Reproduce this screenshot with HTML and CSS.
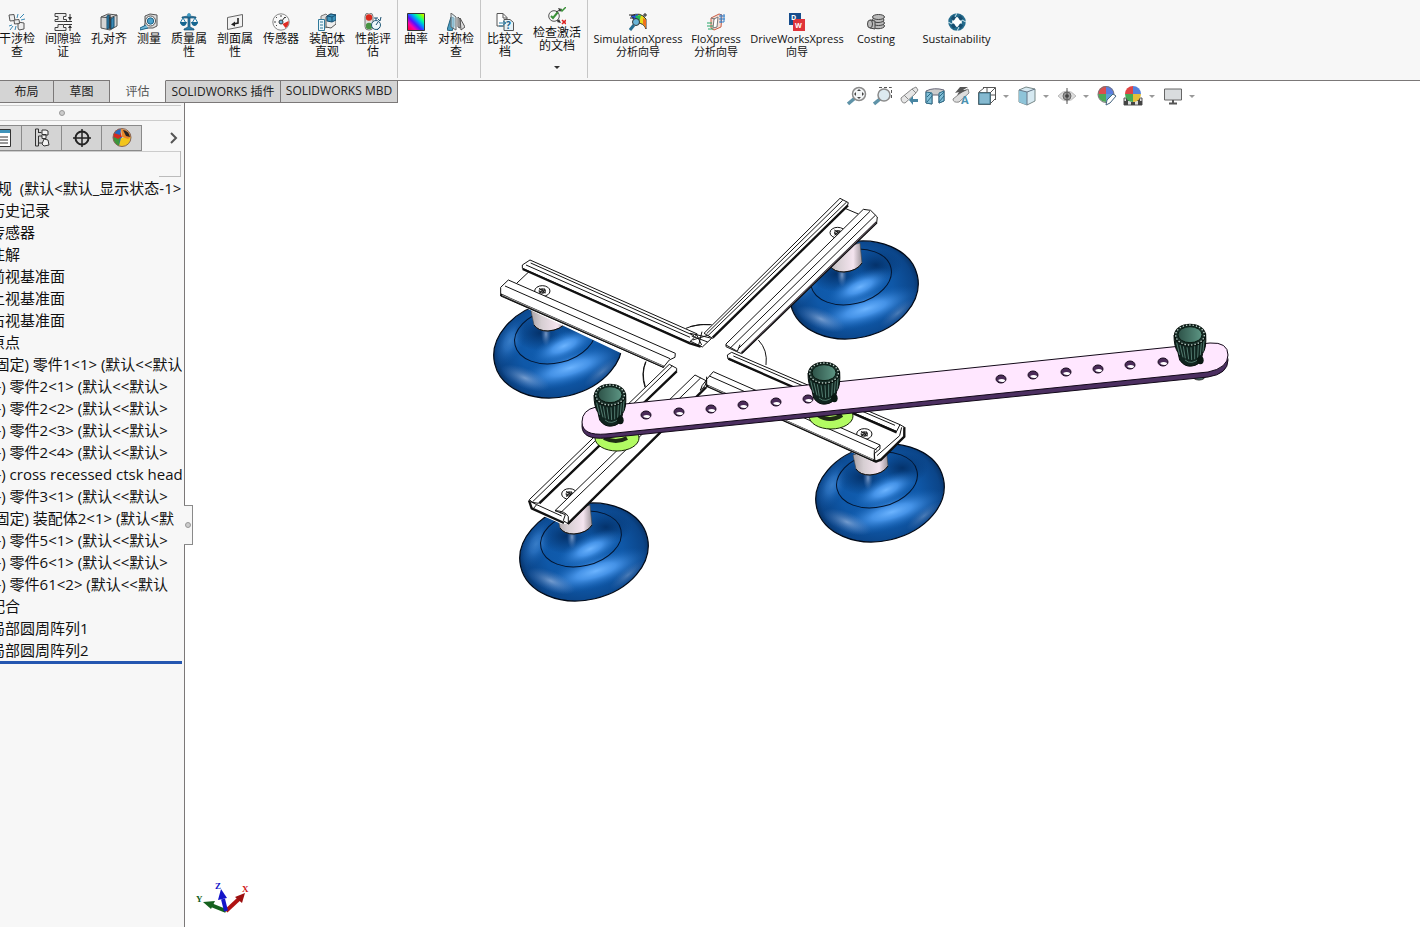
FILE: index.html
```html
<!DOCTYPE html>
<html lang="zh-CN">
<head>
<meta charset="utf-8">
<title>SOLIDWORKS</title>
<link rel="stylesheet" href="styles.css">
</head>
<body>
<header class="ribbon">
  <div class="group group-first">
    <button class="cmd"><svg class="icon" viewBox="0 0 18 18"><g fill="#eee" stroke="#555"><path d="M1 2l5-.500 1 6-5 .500zM10 9l6 1v6l-5 1-1-2z"/><path d="M6 7l5-.500.500 4-5 .500z"/></g><path d="M9 5l1-4M12 5l4-4M13 7l4-1M4 12l-3 1M5 13l-3 4M8 13l-1 4" stroke="#3989b5" fill="none"/></svg><span>干涉检查</span></button>
    <button class="cmd"><svg class="icon" viewBox="0 0 18 18"><path d="M1 .5h11v3H9.500v3h3v2H1v-2h3v-3H1zM1 17.500h11v-3H9.500v-3H4v3H1z" fill="#eee" stroke="#444"/><path d="M10 8.500h8M10 11.500h8M16 1v5M16 18v-5" stroke="#333"/><path d="M14 4h4l-2 4zM14 15h4l-2-3z" fill="#333"/></svg><span>间隙验证</span></button>
    <button class="cmd"><svg class="icon" viewBox="0 0 18 18"><path d="M1 4l7-3 9 1v11l-7 4-9-2z" fill="#d5d5d5" stroke="#555"/><path d="M10 5v12M1 4l9 1 7-3" fill="none" stroke="#555"/><path d="M7 3l2-1v13l-2 1zM11 6l3-2v10l-3 2z" fill="#3989b5" stroke="#174e70"/><path d="M10 2v14" stroke="#111"/></svg><span>孔对齐</span></button>
    <button class="cmd cmd-slim"><svg class="icon" viewBox="0 0 18 18"><path d="M5 3l5-2 7 1v11l-4 2H4l1-5z" fill="#ddd" stroke="#555"/><circle cx="10.500" cy="8" r="5" fill="#fff" stroke="#555"/><circle cx="10.500" cy="8" r="3.200" fill="#4ba2cc" stroke="#1d6286"/><path d="M6 12l-6 3v2l8-2" fill="#6fb6d6" stroke="#1d6286"/></svg><span>测量</span></button>
    <button class="cmd"><svg class="icon" viewBox="0 0 18 18"><path d="M8 1h2v13l4 2v1H4v-1l4-2zM2 4l6-1h2l6 1v1H2z" fill="#287ca6" stroke="#174e70" stroke-width=".7"/><path d="M3 5l-3 5h6zM15 5l-3 5h6z" fill="none" stroke="#287ca6"/><path d="M0 9h7q-1 4-3.500 4T0 9zM11 9h7q-1 4-3.500 4T11 9z" fill="#176690"/><circle cx="9" cy="2" r="1.800" fill="#3d9cc6"/></svg><span>质量属性</span></button>
    <button class="cmd"><svg class="icon" viewBox="0 0 18 18"><path d="M1.500 4.500l15-3v12l-15 3z" fill="#f2f2f2" stroke="#666"/><path d="M12 5v5l-5 1" fill="none" stroke="#222" stroke-width="1.600"/><path d="M5 11.500l4-3v5z" fill="#222"/></svg><span>剖面属性</span></button>
    <button class="cmd"><svg class="icon" viewBox="0 0 18 18"><circle cx="9" cy="9" r="8.200" fill="#f8f8f8" stroke="#888"/><path d="M9 2v2M4 4l1 1M2 9h2M14 4l-1 1M4 13l1-1M13 13l1 1" stroke="#444"/><path d="M9 9l4-5" stroke="#222"/><path d="M16.500 8q1 4-3 7l-3-4z" fill="#df2c23"/><circle cx="9" cy="9" r="2" fill="#69b4d8" stroke="#333"/></svg><span>传感器</span></button>
    <button class="cmd"><svg class="icon" viewBox="0 0 18 18"><path d="M3 3l5-2 2 2v11l-7 2z" fill="#ddd" stroke="#777"/><path d="M8 4l4-3 6 1v9l-5 4-5-1z" fill="#eee" stroke="#555"/><path d="M9 3l4-2 5 1v5l-4 2-5-1z" fill="#3e93ba" stroke="#174e70"/><path d="M9 3l5 1 4-2M14 4v5" fill="none" stroke="#174e70"/><path d="M.5 6.500h6v11h-6z" fill="#eaf6fb" stroke="#31799a"/><path d="M2 9h3M2 12h3M2 15h3" stroke="#31799a"/></svg><span>装配体直观</span></button>
    <button class="cmd"><svg class="icon" viewBox="0 0 18 18"><rect x="1" y="0" width="8" height="17" rx="3.500" fill="#ddd" stroke="#777"/><circle cx="5" cy="4.500" r="3.200" fill="#da291c"/><circle cx="5" cy="13" r="3.200" fill="#489342"/><circle cx="12" cy="12" r="4.500" fill="#eef6fa" stroke="#245c79"/><path d="M12 7V5M10 5h4M12 12l2-3M13 17l3-3M14 6l2 2 1-4" stroke="#174e70" fill="none"/></svg><span>性能评估</span></button>
  </div>
  <div class="group">
    <button class="cmd cmd-slim"><svg class="icon" viewBox="0 0 18 18"><defs><linearGradient id="rainbow" x1="0" y1="1" x2="1" y2="0"><stop offset="0" stop-color="#f02"/><stop offset=".25" stop-color="#f0a"/><stop offset=".42" stop-color="#51f"/><stop offset=".58" stop-color="#09f"/><stop offset=".72" stop-color="#0f9"/><stop offset=".88" stop-color="#9f0"/><stop offset="1" stop-color="#fe0"/></linearGradient></defs><path d="M.5 .5h17v17H.5z" fill="url(#rainbow)" stroke="#333"/></svg><span>曲率</span></button>
    <button class="cmd"><svg class="icon" viewBox="0 0 18 18"><path d="M4 4L0 17l5 1 2-5V5z" fill="#4b9dc0" stroke="#24617e"/><path d="M4 0v14l5 3V4z" fill="#c3dfeb" fill-opacity=".6" stroke="#666"/><path d="M11 4v10l2 1V6zM13 5l5 9-4 3z" fill="#ddd" stroke="#555"/></svg><span>对称检查</span></button>
  </div>
  <div class="group">
    <button class="cmd"><svg class="icon" viewBox="0 0 18 18"><path d="M1 .5h6l4 4V13H1z" fill="#fff" stroke="#555"/><path d="M7 .5V5h4" fill="none" stroke="#555"/><path d="M8 6.500h6l3.500 3v8H8z" fill="#e5f2f8" stroke="#555"/><text x="10" y="16" class="glyph" fill="#176690">?</text><path d="M3 10h6M3 13h4M7 8l3 2-3 2" stroke="#287ca6" fill="none"/></svg><span>比较文档</span></button>
    <button class="cmd cmd-drop"><svg class="icon" viewBox="0 0 18 18"><circle cx="6" cy="9" r="5.300" fill="#f7f7f7" stroke="#555"/><path d="M3 9l2 2 5-6" fill="none" stroke="#3b9139" stroke-width="2"/><path d="M8 5l4-2M9 13l3 2" stroke="#333"/><path d="M10 1l4 1-2 3zM11 12l2 4-4-1z" fill="#333"/><path d="M13 2l1 2 4-4" fill="none" stroke="#3b9139" stroke-width="1.500"/><path d="M14 13l4 4M18 13l-4 4" stroke="#d22" stroke-width="1.600"/></svg><span>检查激活的文档</span><i class="caret caret-dark"></i></button>
  </div>
  <div class="group group-last">
    <button class="cmd cmd-sim"><svg class="icon" viewBox="0 0 18 18"><path d="M2 3q9-5 15 3v10q-2-6-9-6z" fill="#e8d91b" stroke="#333"/><path d="M2 3l6 7 1-9z" fill="#2453d8"/><path d="M6 3l4 7 2-8z" fill="#23bb56"/><path d="M14 5l3 2v9q-1-4-3-5z" fill="#f0701c"/><circle cx="7" cy="9" r="3.500" fill="#69b4d8" stroke="#333"/><path d="M5 12l-4 5" stroke="#246c91" stroke-width="3"/><path d="M0 2h6M1 5h4M16 0v4M14 2h4" stroke="#222"/></svg><span>SimulationXpress 分析向导</span></button>
    <button class="cmd cmd-flo"><svg class="icon" viewBox="0 0 18 18"><path d="M4 5l8-4 3 1-1 12-7 3-3-2z" fill="#f4ddd4" stroke="#c95d45"/><path d="M7 6l4-2-1 10-4 1zM4 5l4 1" fill="#fff" stroke="#777"/><path d="M0 10h5M0 13h6M1 16h5" stroke="#26a568"/><path d="M12 3h6M12 6h6M12 9h5M14 1v9M17 1v8" stroke="#3481ca"/></svg><span>FloXpress 分析向导</span></button>
    <button class="cmd cmd-drive"><svg class="icon" viewBox="0 0 18 18"><path d="M1 0h12v12H1z" fill="#174d8c"/><path d="M5 6h12v12H5z" fill="#df343a"/><text x="3" y="7" class="glyph glyph-small" fill="#fff">D</text><text x="7" y="15" class="glyph glyph-small" fill="#fff">W</text></svg><span>DriveWorksXpress 向导</span></button>
    <button class="cmd cmd-cost"><svg class="icon" viewBox="0 0 18 18"><g fill="#bbb" stroke="#444"><ellipse cx="11" cy="13" rx="6.500" ry="2.700"/><ellipse cx="11.500" cy="10" rx="6" ry="2.500"/><ellipse cx="11" cy="7" rx="6" ry="2.500"/><ellipse cx="11.500" cy="4" rx="6" ry="2.500"/><path d="M3 7l5 1v8l-5-1z"/><ellipse cx="3" cy="11" rx="2.500" ry="4"/></g></svg><span>Costing</span></button>
    <button class="cmd cmd-sus"><svg class="icon" viewBox="0 0 18 18"><circle cx="9" cy="9" r="6.800" fill="#fff" stroke="#256c8d" stroke-width="4"/><path d="M4 4l3 2M14 4l-3 2M4 14l3-2M14 14l-3-2" stroke="#174e70" stroke-width="4"/><path d="M9 4l2 3 3 2-3 2-2 3-2-3-3-2 3-2z" fill="#fff"/><path d="M9 0l-2 4M18 9l-4-2M9 18l2-4M0 9l4 2" stroke="#cfe8f1"/></svg><span>Sustainability</span></button>
  </div>
</header>

<div class="strip">
  <nav class="tabs" aria-label="CommandManager">
    <button class="tab tab-layout">布局</button>
    <button class="tab">草图</button>
    <button class="tab tab-active">评估</button>
    <button class="tab tab-plugin">SOLIDWORKS 插件</button>
    <button class="tab tab-mbd">SOLIDWORKS MBD</button>
  </nav>
  <div class="viewbar">
    <button class="view" aria-label="Zoom to fit"><svg viewBox="0 0 20 20"><path d="M8 12l-7 6" stroke="#5f93a8" stroke-width="3.500"/><circle cx="12" cy="8" r="6.500" fill="#f3f5f6" stroke="#8b8b8b" stroke-width="1.500"/><path d="M12 3l2 2h-4zM12 13l2-2h-4zM7 8l2-2v4zM17 8l-2-2v4z" fill="#444"/></svg></button>
    <button class="view" aria-label="Zoom area"><svg viewBox="0 0 20 20"><path d="M6 1.500h12.500V14" fill="none" stroke="#555" stroke-dasharray="3 2"/><path d="M7 13l-6 5" stroke="#5f93a8" stroke-width="3.500"/><circle cx="11" cy="9" r="6" fill="#dceaf0" stroke="#8b8b8b" stroke-width="1.500"/></svg></button>
    <button class="view" aria-label="Previous view"><svg viewBox="0 0 20 20"><path d="M2 12l11-9 4-2 2 3-3 4-10 9q-4 0-4-5z" fill="#e6e6e6" stroke="#888"/><path d="M5 9l4 4M13 3l4 4" stroke="#888"/><path d="M10 14l4-4v3h5v3h-5v3z" fill="#4785a2"/></svg></button>
    <button class="view" aria-label="Section view"><svg viewBox="0 0 20 20"><path d="M1 5q8-4 18-1v11l-5 2V9H7v9l-6-1z" fill="#ccc" stroke="#667"/><path d="M1 6l6 1v11l-6-1zM14 7l5-2v10l-5 2z" fill="#82bed6" stroke="#2d6c88"/><path d="M2 11l4-4M2 16l5-6M14 11l5-5M14 16l5-6" stroke="#2d6c88"/></svg></button>
    <button class="view" aria-label="Dynamic annotation views"><svg viewBox="0 0 20 20"><path d="M2 13l10-8 5-2 1 4-10 9q-6 1-6-3z" fill="#ddd" stroke="#888"/><path d="M4 7l5-6h8l-5 3h4L6 9l2-3z" fill="#555"/><text x="10" y="18" class="glyph glyph-a" fill="#4c91af">A</text></svg></button>
    <button class="view" aria-label="View orientation"><svg viewBox="0 0 20 20"><path d="M1.500 6.500h12v12h-12zM6 1.500h12.500V14" fill="#fff" stroke="#555"/><path d="M2 7h11v11H2z" fill="#85b9d0" stroke="#457c93"/><path d="M2 6l5-4M13 7l5-5M13 18l5-5M10 1v6M14 9h4" stroke="#555"/></svg></button><i class="caret"></i>
    <button class="view" aria-label="Display style"><svg viewBox="0 0 20 20"><path d="M2 4l7-3 9 2v12l-8 4-8-3z" fill="#d6e9f1" stroke="#788"/><path d="M2 4l8 2v13l-8-3z" fill="#8ec4d9"/><path d="M2 4l8 2 8-3M10 6v13" stroke="#678" fill="none"/></svg></button><i class="caret"></i>
    <button class="view" aria-label="Hide/show items"><svg viewBox="0 0 20 20"><path d="M1 10q9-10 18 0-9 10-18 0z" fill="#ddd" stroke="#bbb"/><circle cx="10" cy="10" r="4" fill="#999" stroke="#666"/><circle cx="10" cy="10" r="1.800" fill="#333"/><path d="M10 2v16" stroke="#555"/></svg></button><i class="caret"></i>
    <button class="view" aria-label="Edit appearance"><svg viewBox="0 0 20 20"><path d="M9 8V0a8 8 0 0 1 8 8z" fill="#5b7cdf"/><path d="M9 8V0a8 8 0 0 0-8 8z" fill="#db4d4d"/><path d="M9 8h8a8 8 0 0 1-8 8z" fill="#5c9fd6"/><path d="M9 8H1a8 8 0 0 0 8 8z" fill="#4ca958"/><circle cx="9" cy="8.500" r="8" fill="none" stroke="#777"/><path d="M10 14l6-6 3 2-6 7-4 2z" fill="#fff" stroke="#45647e"/></svg></button>
    <button class="view" aria-label="Apply scene"><svg viewBox="0 0 20 20"><path d="M1 12h18v7H1z" fill="#ddd" stroke="#555"/><path d="M1 15h4v4H1zM8 16h4v3H8zM15 15h4v4h-4zM3 12h3v3H3zM14 12h3v3h-3z" fill="#444"/><path d="M10 8V0a8 8 0 0 1 8 8z" fill="#5481dc"/><path d="M10 8V0a8 8 0 0 0-8 8z" fill="#df4444"/><path d="M10 8H2a8 8 0 0 0 8 8z" fill="#47aa55"/><path d="M10 8h8a8 8 0 0 1-8 8z" fill="#e4bf39"/></svg></button><i class="caret"></i>
    <button class="view" aria-label="View settings"><svg viewBox="0 0 20 20"><path d="M1.500 3h17v11h-17z" fill="#d9dcde" stroke="#666"/><path d="M10 14v4M6 17.500h8" stroke="#555" stroke-width="2"/></svg></button><i class="caret"></i>
  </div>
</div>

<main class="workspace">
  <aside class="panel">
    <div class="grip"><i class="dot"></i></div>
    <div class="managers">
      <button class="mgr mgr-cut" aria-label="Property manager"><svg viewBox="0 0 22 22"><path d="M0 2.500h16.500v17H0z" fill="#fff" stroke="#333"/><path d="M0 3h16v3H0z" fill="#3e93ba"/><path d="M0 10h3M0 13h3M0 16h3M5 10h9M5 13h9M5 16h9" stroke="#333"/></svg></button>
      <button class="mgr" aria-label="Configuration manager"><svg viewBox="0 0 22 22"><path d="M4.500 2v17h3v-3h4M7.500 16V9h4M7.500 5.500h3M4.500 2h3v4" fill="none" stroke="#333"/><path d="M11 3h4l2 1v4h-5l-1-1zM11 7.500h4v4h-4zM13 12l4 1 1 5-5 1-2-2z" fill="#f3f3f3" stroke="#333"/></svg></button>
      <button class="mgr" aria-label="DimXpert manager"><svg viewBox="0 0 22 22"><circle cx="11" cy="11" r="6.500" fill="none" stroke="#222" stroke-width="2"/><path d="M11 2v18M2 11h18" stroke="#222" stroke-width="1.500"/></svg></button>
      <button class="mgr" aria-label="Display manager"><svg viewBox="0 0 22 22"><path d="M11 10L8 2q-6 2-6 9z" fill="#d22b20"/><path d="M11 10L2 9q1 9 7 10z" fill="#266ac1"/><path d="M2 11q2-2 7 0l-1 8q-5-2-6-8z" fill="#3b9639"/><path d="M10 11l-2 8Q19 21 20 10z" fill="#f3c51c"/><path d="M2 10q1-7 7-8l1 8-3 2q-3-2-5-2z" fill="#d22b20"/><path d="M3 6q3-4 7-4l-1 6z" fill="#266ac1"/><path d="M11 10L10 2q8 0 10 8l-3 2z" fill="#e9872a"/><path d="M12 3q6 1 7 7l-4-1z" fill="#2b2424"/><circle cx="11" cy="10.500" r="9" fill="none" stroke="#865"/></svg></button>
      <button class="more" aria-label="More"><svg viewBox="0 0 10 12"><path d="M2 1l5 5-5 5" fill="none" stroke="#555" stroke-width="2"/></svg></button>
    </div>
    <div class="filter"></div>
    <ul class="tree">
      <li class="root">规  (默认&lt;默认_显示状态-1&gt;</li>
      <li>历史记录</li>
      <li>传感器</li>
      <li>注解</li>
      <li>前视基准面</li>
      <li>上视基准面</li>
      <li>右视基准面</li>
      <li>原点</li>
      <li>(固定) 零件1&lt;1&gt; (默认&lt;&lt;默认</li>
      <li class="float">(-) 零件2&lt;1&gt; (默认&lt;&lt;默认&gt;</li>
      <li class="float">(-) 零件2&lt;2&gt; (默认&lt;&lt;默认&gt;</li>
      <li class="float">(-) 零件2&lt;3&gt; (默认&lt;&lt;默认&gt;</li>
      <li class="float">(-) 零件2&lt;4&gt; (默认&lt;&lt;默认&gt;</li>
      <li class="float">(-) cross recessed ctsk head</li>
      <li class="float">(-) 零件3&lt;1&gt; (默认&lt;&lt;默认&gt;</li>
      <li>(固定) 装配体2&lt;1&gt; (默认&lt;默</li>
      <li class="float">(-) 零件5&lt;1&gt; (默认&lt;&lt;默认&gt;</li>
      <li class="float">(-) 零件6&lt;1&gt; (默认&lt;&lt;默认&gt;</li>
      <li class="float">(-) 零件61&lt;2&gt; (默认&lt;&lt;默认</li>
      <li>配合</li>
      <li>局部圆周阵列1</li>
      <li>局部圆周阵列2</li>
    </ul>
    <button class="flap" aria-label="Collapse panel"><i class="dot"></i></button>
  </aside>

  <section class="canvas">
    <svg class="model" viewBox="185 102 1235 825" preserveAspectRatio="xMinYMin meet" role="img" aria-label="Suction cup assembly">
      <defs>
        <radialGradient id="bowl" cx=".5" cy=".5" r=".55">
          <stop offset="0" stop-color="#1160b4"/><stop offset=".5" stop-color="#0f58a8"/><stop offset=".78" stop-color="#0b4589"/><stop offset="1" stop-color="#04152e"/>
        </radialGradient>
        <radialGradient id="shine"><stop offset="0" stop-color="#6cb4ff"/><stop offset=".35" stop-color="#4f9df2" stop-opacity=".85"/><stop offset="1" stop-color="#155fb0" stop-opacity="0"/></radialGradient>
        <radialGradient id="shade"><stop offset="0" stop-color="#04326b"/><stop offset="1" stop-color="#04326b" stop-opacity="0"/></radialGradient>
        <radialGradient id="glow"><stop offset="0" stop-color="#a6bfe4"/><stop offset="1" stop-color="#5c84c0" stop-opacity="0"/></radialGradient>
        <linearGradient id="stem"><stop offset="0" stop-color="#aaa3a6"/><stop offset=".3" stop-color="#d6ced2"/><stop offset=".75" stop-color="#f4e4ef"/><stop offset="1" stop-color="#9d949a"/></linearGradient>
        <linearGradient id="cap"><stop offset="0" stop-color="#2d5248"/><stop offset="1" stop-color="#5d9684"/></linearGradient>
        <clipPath id="rim"><ellipse rx="65" ry="48" transform="rotate(-13)"/></clipPath>
        <g id="cup">
          <g clip-path="url(#rim)">
            <path d="M-70-60H70V60H-70z" fill="url(#bowl)"/>
            <ellipse cx="-48" cy="-8" rx="14" ry="26" fill="url(#shine)" opacity=".45" transform="rotate(25 -48 -8)"/>
            <ellipse cx="-18" cy="-16" rx="26" ry="18" fill="url(#shade)"/>
            <ellipse cx="22" cy="-25" rx="26" ry="16" fill="url(#shade)"/>
            <ellipse cx="12" cy="19" rx="58" ry="17" fill="url(#shine)" transform="rotate(-17 12 19)"/>
            <ellipse cx="6" cy="-3" rx="36" ry="14" fill="url(#shine)" transform="rotate(-24 6 -3)"/>
            <ellipse cx="-33" cy="29" rx="26" ry="10" fill="url(#glow)" opacity=".65" transform="rotate(22 -33 29)"/>
            <ellipse cx="44" cy="23" rx="22" ry="7" fill="url(#glow)" opacity=".4" transform="rotate(-38 44 23)"/>
            <ellipse cx="-12" cy="-15" rx="5" ry="12" fill="url(#glow)" opacity=".7"/>
          </g>
          <ellipse rx="65" ry="48" transform="rotate(-13)" fill="none" stroke="#020a18" stroke-width="1.200"/>
          <ellipse cx="-3" cy="-13" rx="41" ry="27" transform="rotate(-13 -3 -13)" fill="none" stroke="#03142e"/>
          <path d="M-27-38l3 14q4 6 14 6 13-1 18-9l-2-20z" fill="url(#stem)" stroke="#444" stroke-width=".6"/>
          <path d="M-24-24q4 6 14 6 13-1 18-9" fill="none" stroke="#111"/>
        </g>
        <g id="screw"><ellipse rx="23" ry="16" fill="#fff" stroke="#111" stroke-width="3"/><ellipse rx="11" ry="8" fill="#333"/><path d="M-9-3l18 6M-5 6L6-7" stroke="#ddd" stroke-width="3"/><path d="M-10-8l20 14M-9 8l17-15" stroke="#111" stroke-width="3"/></g>
        <g id="hole"><ellipse rx="5" ry="4" fill="#4b2c59" stroke="#160a1c"/><path d="M-3 1q4-2 7 0 0 2-3 2t-4-2z" fill="#fff"/></g>
        <g id="knob">
          <path d="M-48 0q0 35 12 53l5 22q15 22 37 18 24-3 29-24l3-14Q50 40 47-4z" fill="#10241f" stroke="#050c0a" stroke-width="3"/>
          <path d="M-40 23l9 37M-30 30l9 37M-20 34l6 36M-9 37l5 36M3 37l2 38M14 34l0 39M25 30l-2 39M34 24l-3 36M42 16l-3 34" stroke="#5f8c7e" stroke-width="2.500"/>
          <ellipse rx="46" ry="32" fill="#172d27" stroke="#07120e" stroke-width="4"/>
          <ellipse rx="43" ry="30" fill="none" stroke="#c6d6cf" stroke-width="4" stroke-dasharray="4 6"/>
          <ellipse rx="36" ry="24" cy="-1" fill="url(#cap)" stroke="#091811" stroke-width="3"/>
          <path d="M-15 75q20 17 43-5" stroke="#4e7568" stroke-width="3" fill="none"/>
          <ellipse cx="31" cy="76" rx="10" ry="12" fill="#091712"/>
        </g>
      </defs>

      <use href="#cup" x="558" y="349"/>
      <use href="#cup" x="854" y="290"/>
      <use href="#cup" x="880" y="493"/>
      <use href="#cup" x="584" y="552"/>

      <!-- upper left rail -->
      <g class="rail" transform="translate(480 190) scale(.3333)">
        <path class="floor" d="M85 272l25 10 37-37-20-13 23-21 500 221-20 28-75 30-37 45L62 318v-26z"/>
        <path d="M147 245l-37 35"/>
        <path d="M618 415q32-14 72-11M497 515q-15 37-2 77"/>
        <use href="#screw" x="187" y="303"/>
        <path class="fill" d="M127 235v-10l23-15 502 222-24 26z"/>
        <path d="M152 219l490 218M138 225l492 217"/>
        <path class="edge" d="M128 237l502 223 32 10"/>
        <path class="fill" d="M62 318v-26l23-22 501 220-1 12-17 8-18 22z"/>
        <path d="M75 288l495 218"/>
        <path class="edge" d="M62 314l490 217"/><path class="gray" d="M66 315l484 214"/>
      </g>
      <!-- upper right rail -->
      <g class="rail" transform="translate(690 190) scale(.3333)">
        <path class="floor" d="M45 430L450 25l25 15-10 15 50 15 25-10 22 20-2 18-405 392-47-23-73-2z"/>
        <path d="M465 55l40 17M0 410q30-9 65-6M205 450q29 30 23 75"/>
        <use href="#screw" x="443" y="128"/>
        <path class="fill" d="M42 430L450 25l25 13-3 10L68 445z"/>
        <path d="M50 431L458 31M54 437L470 36"/>
        <path class="edge" d="M68 443L474 46"/>
        <path class="fill" d="M108 462L520 58l22 3 20 20-2 18-405 392-15-6-32-15z"/>
        <path d="M123 472L540 64M145 476L556 76M108 465l34 19 8-20"/>
        <path class="edge" d="M155 489L560 97"/><path class="violet" d="M158 484L558 98"/>
        <path d="M0 430l45 10 20 5-28 26-37-18M8 450l45-14M20 435l15 30M36 425l-10 40M5 438l48 18"/>
      </g>
      <!-- lower left rail -->
      <g class="rail" transform="translate(510 350) scale(.3333)">
        <path class="floor" d="M478 45l24 15-150 170 236-137 1 20-415 409-20 0-90-40-8-30z"/>
        <use href="#screw" x="178" y="432"/>
        <path class="fill" d="M478 43l22 12v10L85 460l-18-3-9-8z"/>
        <path d="M487 48L67 456"/>
        <path class="edge" d="M500 64L88 460M57 451l8 24 97 44"/>
        <path d="M80 464l75 34M62 455l18 9-10 12"/>
        <path class="fill" d="M555 75l33 17 2 20-415 410-15-10 6-18-31-12z"/>
        <path d="M572 84L150 490M135 482q31 1 40 18v22M588 92q-15 15-17 30"/>
        <path class="edge" d="M588 112L174 521"/>
        <path d="M408 35q-15 35-2 75"/>
      </g>
      <!-- lower right rail -->
      <g class="rail" transform="translate(700 340) scale(.3333)">
        <path class="floor" d="M82 45l13-8 515 220 4 30-75 75-20 4L20 138v-20l20-23 100 35z"/>
        <use href="#screw" x="493" y="282"/>
        <path class="fill" d="M82 45l13-8 505 217-10 20L84 57z"/>
        <path d="M100 48l485 208M600 254l14 8-2 28-74 74M605 262l-6 25-68 60"/>
        <path class="edge" d="M85 56l505 221M613 262v28l-73 72"/>
        <path class="fill" d="M20 118l20-23 500 220v12l-17 14 2 24L20 138z"/>
        <path d="M28 108l502 222M540 316l-17 15v28M0 150q22-10 20-40"/>
        <path class="edge" d="M20 137l508 228 14-6"/><path class="gray" d="M25 138l494 221"/>
      </g>

      <g class="disc"><ellipse cx="831" cy="416" rx="22" ry="13"/><ellipse cx="617" cy="438" rx="22" ry="13"/><path class="thread" d="M818 415q12 8 24 0M604 438q12 6 23 0"/></g>
      <ellipse cx="1199" cy="375" rx="7" ry="5" fill="#537e77" stroke="#222"/>
      <path class="bar-edge" d="M596 411l614-64q18-1 18 13 0 14-20 17L606 438q-24 2-24-12 0-12 14-15z"/>
      <path class="bar-face" d="M596 407l614-64q18-1 18 12 0 13-20 17L606 434q-24 2-24-12 0-12 14-15z"/>
      <g>
        <use href="#hole" x="646" y="415"/><use href="#hole" x="679" y="412"/><use href="#hole" x="711" y="409"/><use href="#hole" x="743" y="405"/><use href="#hole" x="776" y="402"/><use href="#hole" x="808" y="399"/>
        <use href="#hole" x="1001" y="379"/><use href="#hole" x="1033" y="375"/><use href="#hole" x="1066" y="372"/><use href="#hole" x="1098" y="369"/><use href="#hole" x="1130" y="365"/><use href="#hole" x="1163" y="362"/>
      </g>
      <use href="#knob" transform="translate(610 395) scale(.3333)"/>
      <use href="#knob" transform="translate(824 373) scale(.3333)"/>
      <use href="#knob" transform="translate(1190 335) scale(.3333)"/>

      <g class="triad">
        <path d="M226 911l-15-6" stroke="#15611e" stroke-width="4"/><path d="M203 902l12-1-4 8z" fill="#15611e"/>
        <path d="M226 911l14-13" stroke="#b01313" stroke-width="4"/><path d="M245 893l-3 10-7-6z" fill="#9c1010"/>
        <path d="M226 911l-3-12" stroke="#1414c9" stroke-width="4"/><path d="M221 889l6 9-9 2z" fill="#1414c9"/>
        <text x="196" y="902" fill="#15611e">Y</text><text x="215" y="889" fill="#1414c9">Z</text><text x="242" y="892" fill="#d01515">X</text>
      </g>
    </svg>
  </section>
</main>
</body>
</html>
```
FILE: styles.css
```css
* { box-sizing: border-box; }
body {
  margin: 0;
  min-height: 100vh;
  display: flex;
  flex-direction: column;
  overflow: hidden;
  background: #fff;
  color: #111;
  font-family: "Open Sans", "Noto Sans CJK SC", sans-serif;
}
button {
  border: 0;
  padding: 0;
  background: none;
  color: inherit;
  font: inherit;
}
svg { display: block; }

.ribbon {
  display: flex;
  height: 81px;
  background: #f7f7f7;
  border-bottom: 1px solid #7b7878;
}
.group {
  display: flex;
  padding: 0 1px;
  border-right: 1px solid #c6c6c6;
  height: 78px;
}
.group-first { margin-left: -7px; }
.group-last { border-right: 0; }
.cmd {
  display: flex;
  flex-direction: column;
  align-items: center;
  width: 46px;
  padding: 13px 5px 0;
  font-size: 12px;
  line-height: 13px;
  text-align: center;
}
.cmd span { margin-top: 1px; }
.cmd-slim { width: 34px; }
.cmd-drop { width: 58px; padding: 7px 4px 0; }
.cmd-drop .caret { margin-top: 14px; }
.cmd-sim { width: 98px; }
.cmd-flo { width: 58px; }
.cmd-drive { width: 104px; }
.cmd-cost { width: 54px; }
.cmd-sus { width: 107px; }
.cmd-sim, .cmd-flo, .cmd-drive, .cmd-cost, .cmd-sus { padding: 13px 0 0; }
.group-last .cmd { font-size: 11px; }
.icon { width: 18px; height: 18px; flex: none; }
.glyph { font: bold 10px "Open Sans", sans-serif; }
.glyph-small { font-size: 7px; }
.glyph-a { font-size: 11px; }

.caret {
  width: 6px;
  border: 3px solid transparent;
  border-top-color: #999;
  border-bottom: 0;
}
.caret-dark { border-top-color: #333; }

.strip {
  display: flex;
  height: 21px;
}
.tabs { display: flex; margin-top: -1px; height: 23px; }
.tab {
  width: 56px;
  padding-bottom: 2px;
  border: 1px solid #7b7878;
  border-left: 0;
  background: #d4d4d4;
  color: #222;
  font-size: 12px;
  white-space: nowrap;
}
.tab-layout { width: 54px; }
.tab-active { border-top-color: #f7f7f7; background: #f7f7f7; color: #555; }
.tab-plugin { width: 115px; }
.tab-mbd { width: 117px; }
.viewbar {
  display: flex;
  align-items: center;
  height: 30px;
  margin-left: auto;
  margin-right: 220px;
}
.view {
  display: flex;
  justify-content: center;
  width: 26px;
}
.view svg { width: 20px; height: 20px; }
.viewbar .caret { margin: 0 5px 0 3px; }

.workspace { flex: 1; display: flex; min-height: 0; }
.panel {
  position: relative;
  flex: none;
  width: 185px;
  background: #f7f7f7;
  border: solid #7b7878;
  border-width: 1px 1px 0 0;
}
.grip {
  display: flex;
  align-items: center;
  height: 16px;
  margin: 2px 3px 0 0;
  padding-left: 59px;
  border: solid #ccc;
  border-width: 1px 0;
}
.dot {
  width: 6px;
  height: 6px;
  border: 1px solid #999;
  border-radius: 50%;
  background: #ccc;
}
.managers {
  display: flex;
  height: 26px;
  margin-top: 4px;
}
.mgr {
  display: flex;
  align-items: center;
  justify-content: center;
  width: 40px;
  border: 1px solid #8a8a8a;
  border-left: 0;
  background: #d4d4d4;
}
.mgr svg { width: 22px; height: 22px; }
.mgr-cut { width: 22px; justify-content: flex-start; overflow: hidden; }
.mgr-cut svg { margin-left: -6px; flex: none; }
.more { margin: 0 5px 0 auto; }
.more svg { width: 10px; height: 12px; }
.filter {
  height: 26px;
  margin-right: 3px;
  border-right: 1px solid #bbb;
  background:
    linear-gradient(#bbb, #bbb) right bottom / 21px 1px no-repeat,
    linear-gradient(#ccc, #ccc) right top / 100% 1px no-repeat;
}
.tree {
  margin: 0 2px 0 0;
  padding: 0;
  list-style: none;
  overflow: hidden;
  border-bottom: 3px solid #2456b0;
  font-size: 15px;
  line-height: 22px;
}
.tree li { height: 22px; margin-left: -10px; white-space: pre; }
.tree .root { margin-left: -3px; }
.tree .float { margin-left: -8px; }
.flap {
  position: absolute;
  top: 402px;
  right: -9px;
  width: 9px;
  height: 40px;
  display: flex;
  align-items: center;
  justify-content: center;
  border: 1px solid #8a8a8a;
  border-left: 0;
  background: #f7f7f7;
}
.flap .dot { flex: none; }

.canvas { flex: 1; min-width: 0; }
.model { width: 100%; height: 100%; }
.rail path { fill: none; stroke: #111; stroke-width: 3; stroke-linejoin: round; }
.rail .fill { fill: #fff; }
.rail .floor { fill: #fff; stroke: none; }
.rail .edge { stroke-width: 7; }
.rail .gray { stroke: #999; stroke-width: 3; }
.rail .violet { stroke: #9b8498; stroke-width: 2; }
.disc ellipse { fill: #b2fb62; stroke: #162307; }
.disc .thread { fill: none; stroke: #1f2d14; stroke-width: 4; }
.bar-edge { fill: #4c2f61; stroke: #120818; }
.bar-face { fill: #ffe7ff; stroke: #120818; }
.triad text { font: bold 9px "Liberation Serif", serif; }
```
